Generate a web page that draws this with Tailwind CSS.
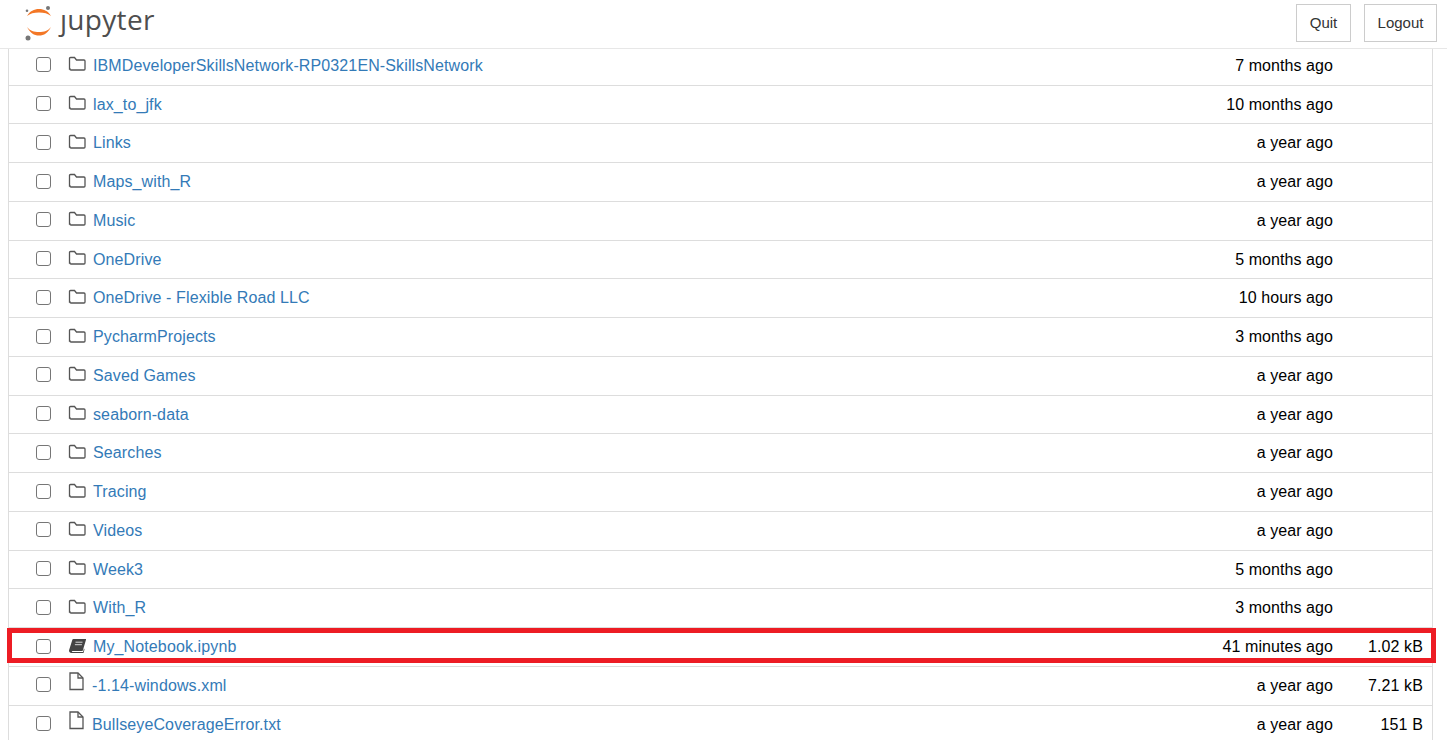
<!DOCTYPE html>
<html lang="en">
<head>
  <meta charset="UTF-8" />
  <title>Jupyter</title>
  <script src="https://cdn.jsdelivr.net/npm/@tailwindcss/browser@4"></script>
</head>
<body class="bg-white text-[16px] tracking-[0.12px] text-black font-['Liberation_Sans',Arial,sans-serif] overflow-hidden h-[740px]">

  <!-- header -->
  <header class="h-[49px] border-b border-[#e7e7e7] flex items-center justify-between pl-[24px] pr-[10px] pb-[2px]">
    <div class="flex items-center gap-[7px]">
      <svg width="29" height="35" viewBox="0 0 29 35">
        <path d="M3 10C6 5 10 3 15 3s9 2 12 7C24 7.500 20 6.500 15 6.500S6 7.500 3 10z" fill="#f37726"/>
        <path d="M3 21c3 6 7 8.500 12 8.500s9-2.500 12-8.500c-3 4-7 5-12 5S6 25 3 21z" fill="#f37726"/>
        <circle cx="24" cy="2" r="2" fill="#767677"/>
        <circle cx="3" cy="4.700" r="1.300" fill="#767677"/>
        <circle cx="4" cy="32" r="2.500" fill="#767677"/>
      </svg>
      <span class="relative text-[28px] leading-none text-[#4e4e4e] tracking-[0.3px] font-['Open_Sans',sans-serif] -mt-[8px]">jupyter<span class="absolute left-0 top-[2px] w-[9px] h-[7.500px] bg-white"></span></span>
    </div>
    <div class="flex gap-[13px] text-[15px] tracking-normal">
      <button class="h-[38px] w-[55px] border border-[#cccccc] text-[#333333]">Quit</button>
      <button class="h-[38px] w-[73px] border border-[#cccccc] text-[#333333]">Logout</button>
    </div>
  </header>

  <!-- file list -->
  <div class="mx-[8px] w-[1425px] border-x border-[#dddddd]">

    <div class="h-[35.600px] flex items-center pl-[27px] pr-[9px] pb-[2.600px]">
      <span class="w-[15px] h-[15px] -mt-[2px] rounded-[3px] border-[1.5px] border-[#767676] bg-white"></span>
      <svg class="ml-[17px] -mt-[3px]" width="18" height="16" viewBox="0 0 18 16" fill="none" stroke="#555555" stroke-width="1.300"><path d="M1.500 13V2.500a1 1 0 0 1 1-1h4l2 2.500h7.500a1 1 0 0 1 1 1v8a1 1 0 0 1-1 1h-13a1 1 0 0 1-1-1z"/></svg>
      <a class="ml-[7px] text-[#337ab7]">IBMDeveloperSkillsNetwork-RP0321EN-SkillsNetwork</a>
      <span class="ml-auto tracking-[0.07px]">7 months ago</span><span class="w-[90px] text-right"></span>
    </div>

    <div class="h-[38.750px] border-t border-[#dddddd] flex items-center pl-[27px] pr-[9px] pt-[0.3px]">
      <span class="w-[15px] h-[15px] -mt-[2px] rounded-[3px] border-[1.5px] border-[#767676] bg-white"></span>
      <svg class="ml-[17px] -mt-[3px]" width="18" height="16" viewBox="0 0 18 16" fill="none" stroke="#555555" stroke-width="1.300"><path d="M1.500 13V2.500a1 1 0 0 1 1-1h4l2 2.500h7.500a1 1 0 0 1 1 1v8a1 1 0 0 1-1 1h-13a1 1 0 0 1-1-1z"/></svg>
      <a class="ml-[7px] text-[#337ab7]">lax_to_jfk</a>
      <span class="ml-auto tracking-[0.07px]">10 months ago</span><span class="w-[90px] text-right"></span>
    </div>

    <div class="h-[38.750px] border-t border-[#dddddd] flex items-center pl-[27px] pr-[9px] pt-[0.3px]">
      <span class="w-[15px] h-[15px] -mt-[2px] rounded-[3px] border-[1.5px] border-[#767676] bg-white"></span>
      <svg class="ml-[17px] -mt-[3px]" width="18" height="16" viewBox="0 0 18 16" fill="none" stroke="#555555" stroke-width="1.300"><path d="M1.500 13V2.500a1 1 0 0 1 1-1h4l2 2.500h7.500a1 1 0 0 1 1 1v8a1 1 0 0 1-1 1h-13a1 1 0 0 1-1-1z"/></svg>
      <a class="ml-[7px] text-[#337ab7]">Links</a>
      <span class="ml-auto tracking-[0.07px]">a year ago</span><span class="w-[90px] text-right"></span>
    </div>

    <div class="h-[38.750px] border-t border-[#dddddd] flex items-center pl-[27px] pr-[9px] pt-[0.3px]">
      <span class="w-[15px] h-[15px] -mt-[2px] rounded-[3px] border-[1.5px] border-[#767676] bg-white"></span>
      <svg class="ml-[17px] -mt-[3px]" width="18" height="16" viewBox="0 0 18 16" fill="none" stroke="#555555" stroke-width="1.300"><path d="M1.500 13V2.500a1 1 0 0 1 1-1h4l2 2.500h7.500a1 1 0 0 1 1 1v8a1 1 0 0 1-1 1h-13a1 1 0 0 1-1-1z"/></svg>
      <a class="ml-[7px] text-[#337ab7]">Maps_with_R</a>
      <span class="ml-auto tracking-[0.07px]">a year ago</span><span class="w-[90px] text-right"></span>
    </div>

    <div class="h-[38.750px] border-t border-[#dddddd] flex items-center pl-[27px] pr-[9px] pt-[0.3px]">
      <span class="w-[15px] h-[15px] -mt-[2px] rounded-[3px] border-[1.5px] border-[#767676] bg-white"></span>
      <svg class="ml-[17px] -mt-[3px]" width="18" height="16" viewBox="0 0 18 16" fill="none" stroke="#555555" stroke-width="1.300"><path d="M1.500 13V2.500a1 1 0 0 1 1-1h4l2 2.500h7.500a1 1 0 0 1 1 1v8a1 1 0 0 1-1 1h-13a1 1 0 0 1-1-1z"/></svg>
      <a class="ml-[7px] text-[#337ab7]">Music</a>
      <span class="ml-auto tracking-[0.07px]">a year ago</span><span class="w-[90px] text-right"></span>
    </div>

    <div class="h-[38.750px] border-t border-[#dddddd] flex items-center pl-[27px] pr-[9px] pt-[0.3px]">
      <span class="w-[15px] h-[15px] -mt-[2px] rounded-[3px] border-[1.5px] border-[#767676] bg-white"></span>
      <svg class="ml-[17px] -mt-[3px]" width="18" height="16" viewBox="0 0 18 16" fill="none" stroke="#555555" stroke-width="1.300"><path d="M1.500 13V2.500a1 1 0 0 1 1-1h4l2 2.500h7.500a1 1 0 0 1 1 1v8a1 1 0 0 1-1 1h-13a1 1 0 0 1-1-1z"/></svg>
      <a class="ml-[7px] text-[#337ab7]">OneDrive</a>
      <span class="ml-auto tracking-[0.07px]">5 months ago</span><span class="w-[90px] text-right"></span>
    </div>

    <div class="h-[38.750px] border-t border-[#dddddd] flex items-center pl-[27px] pr-[9px] pt-[0.3px]">
      <span class="w-[15px] h-[15px] -mt-[2px] rounded-[3px] border-[1.5px] border-[#767676] bg-white"></span>
      <svg class="ml-[17px] -mt-[3px]" width="18" height="16" viewBox="0 0 18 16" fill="none" stroke="#555555" stroke-width="1.300"><path d="M1.500 13V2.500a1 1 0 0 1 1-1h4l2 2.500h7.500a1 1 0 0 1 1 1v8a1 1 0 0 1-1 1h-13a1 1 0 0 1-1-1z"/></svg>
      <a class="ml-[7px] text-[#337ab7]">OneDrive - Flexible Road LLC</a>
      <span class="ml-auto tracking-[0.07px]">10 hours ago</span><span class="w-[90px] text-right"></span>
    </div>

    <div class="h-[38.750px] border-t border-[#dddddd] flex items-center pl-[27px] pr-[9px] pt-[0.3px]">
      <span class="w-[15px] h-[15px] -mt-[2px] rounded-[3px] border-[1.5px] border-[#767676] bg-white"></span>
      <svg class="ml-[17px] -mt-[3px]" width="18" height="16" viewBox="0 0 18 16" fill="none" stroke="#555555" stroke-width="1.300"><path d="M1.500 13V2.500a1 1 0 0 1 1-1h4l2 2.500h7.500a1 1 0 0 1 1 1v8a1 1 0 0 1-1 1h-13a1 1 0 0 1-1-1z"/></svg>
      <a class="ml-[7px] text-[#337ab7]">PycharmProjects</a>
      <span class="ml-auto tracking-[0.07px]">3 months ago</span><span class="w-[90px] text-right"></span>
    </div>

    <div class="h-[38.750px] border-t border-[#dddddd] flex items-center pl-[27px] pr-[9px] pt-[0.3px]">
      <span class="w-[15px] h-[15px] -mt-[2px] rounded-[3px] border-[1.5px] border-[#767676] bg-white"></span>
      <svg class="ml-[17px] -mt-[3px]" width="18" height="16" viewBox="0 0 18 16" fill="none" stroke="#555555" stroke-width="1.300"><path d="M1.500 13V2.500a1 1 0 0 1 1-1h4l2 2.500h7.500a1 1 0 0 1 1 1v8a1 1 0 0 1-1 1h-13a1 1 0 0 1-1-1z"/></svg>
      <a class="ml-[7px] text-[#337ab7]">Saved Games</a>
      <span class="ml-auto tracking-[0.07px]">a year ago</span><span class="w-[90px] text-right"></span>
    </div>

    <div class="h-[38.750px] border-t border-[#dddddd] flex items-center pl-[27px] pr-[9px] pt-[0.3px]">
      <span class="w-[15px] h-[15px] -mt-[2px] rounded-[3px] border-[1.5px] border-[#767676] bg-white"></span>
      <svg class="ml-[17px] -mt-[3px]" width="18" height="16" viewBox="0 0 18 16" fill="none" stroke="#555555" stroke-width="1.300"><path d="M1.500 13V2.500a1 1 0 0 1 1-1h4l2 2.500h7.500a1 1 0 0 1 1 1v8a1 1 0 0 1-1 1h-13a1 1 0 0 1-1-1z"/></svg>
      <a class="ml-[7px] text-[#337ab7]">seaborn-data</a>
      <span class="ml-auto tracking-[0.07px]">a year ago</span><span class="w-[90px] text-right"></span>
    </div>

    <div class="h-[38.750px] border-t border-[#dddddd] flex items-center pl-[27px] pr-[9px] pt-[0.3px]">
      <span class="w-[15px] h-[15px] -mt-[2px] rounded-[3px] border-[1.5px] border-[#767676] bg-white"></span>
      <svg class="ml-[17px] -mt-[3px]" width="18" height="16" viewBox="0 0 18 16" fill="none" stroke="#555555" stroke-width="1.300"><path d="M1.500 13V2.500a1 1 0 0 1 1-1h4l2 2.500h7.500a1 1 0 0 1 1 1v8a1 1 0 0 1-1 1h-13a1 1 0 0 1-1-1z"/></svg>
      <a class="ml-[7px] text-[#337ab7]">Searches</a>
      <span class="ml-auto tracking-[0.07px]">a year ago</span><span class="w-[90px] text-right"></span>
    </div>

    <div class="h-[38.750px] border-t border-[#dddddd] flex items-center pl-[27px] pr-[9px] pt-[0.3px]">
      <span class="w-[15px] h-[15px] -mt-[2px] rounded-[3px] border-[1.5px] border-[#767676] bg-white"></span>
      <svg class="ml-[17px] -mt-[3px]" width="18" height="16" viewBox="0 0 18 16" fill="none" stroke="#555555" stroke-width="1.300"><path d="M1.500 13V2.500a1 1 0 0 1 1-1h4l2 2.500h7.500a1 1 0 0 1 1 1v8a1 1 0 0 1-1 1h-13a1 1 0 0 1-1-1z"/></svg>
      <a class="ml-[7px] text-[#337ab7]">Tracing</a>
      <span class="ml-auto tracking-[0.07px]">a year ago</span><span class="w-[90px] text-right"></span>
    </div>

    <div class="h-[38.750px] border-t border-[#dddddd] flex items-center pl-[27px] pr-[9px] pt-[0.3px]">
      <span class="w-[15px] h-[15px] -mt-[2px] rounded-[3px] border-[1.5px] border-[#767676] bg-white"></span>
      <svg class="ml-[17px] -mt-[3px]" width="18" height="16" viewBox="0 0 18 16" fill="none" stroke="#555555" stroke-width="1.300"><path d="M1.500 13V2.500a1 1 0 0 1 1-1h4l2 2.500h7.500a1 1 0 0 1 1 1v8a1 1 0 0 1-1 1h-13a1 1 0 0 1-1-1z"/></svg>
      <a class="ml-[7px] text-[#337ab7]">Videos</a>
      <span class="ml-auto tracking-[0.07px]">a year ago</span><span class="w-[90px] text-right"></span>
    </div>

    <div class="h-[38.750px] border-t border-[#dddddd] flex items-center pl-[27px] pr-[9px] pt-[0.3px]">
      <span class="w-[15px] h-[15px] -mt-[2px] rounded-[3px] border-[1.5px] border-[#767676] bg-white"></span>
      <svg class="ml-[17px] -mt-[3px]" width="18" height="16" viewBox="0 0 18 16" fill="none" stroke="#555555" stroke-width="1.300"><path d="M1.500 13V2.500a1 1 0 0 1 1-1h4l2 2.500h7.500a1 1 0 0 1 1 1v8a1 1 0 0 1-1 1h-13a1 1 0 0 1-1-1z"/></svg>
      <a class="ml-[7px] text-[#337ab7]">Week3</a>
      <span class="ml-auto tracking-[0.07px]">5 months ago</span><span class="w-[90px] text-right"></span>
    </div>

    <div class="h-[38.750px] border-t border-[#dddddd] flex items-center pl-[27px] pr-[9px] pt-[0.3px]">
      <span class="w-[15px] h-[15px] -mt-[2px] rounded-[3px] border-[1.5px] border-[#767676] bg-white"></span>
      <svg class="ml-[17px] -mt-[3px]" width="18" height="16" viewBox="0 0 18 16" fill="none" stroke="#555555" stroke-width="1.300"><path d="M1.500 13V2.500a1 1 0 0 1 1-1h4l2 2.500h7.500a1 1 0 0 1 1 1v8a1 1 0 0 1-1 1h-13a1 1 0 0 1-1-1z"/></svg>
      <a class="ml-[7px] text-[#337ab7]">With_R</a>
      <span class="ml-auto tracking-[0.07px]">3 months ago</span><span class="w-[90px] text-right"></span>
    </div>

    <!-- highlighted notebook row -->
    <div class="relative h-[38.750px] border-t border-[#dddddd] flex items-center pl-[27px] pr-[9px] pt-[0.3px]">
      <div class="absolute -left-[2px] -right-[4px] top-0 h-[34.500px] border-[5px] border-[#ed1c24]"></div>
      <span class="w-[15px] h-[15px] -mt-[2px] rounded-[3px] border-[1.5px] border-[#767676] bg-white"></span>
      <svg class="ml-[17px] -mt-[3px]" width="18" height="16" viewBox="0 0 18 16"><path d="M5.500 1H17.500a.5.5 0 0 1 .5.700L14.800 12.500a1 1 0 0 1-1 .6H4.500c-1 0-1 1 0 1H15l1-3.500.5.800-1 3.600H3.500C1.500 15 .6 13.500 1.200 11.800L4.200 2.200A1.500 1.500 0 0 1 5.500 1z" fill="#444444"/><path d="M7.500 4.200h7M6.900 6.700h7" stroke="#ffffff" stroke-width="0.800"/></svg>
      <a class="ml-[7px] text-[#337ab7]">My_Notebook.ipynb</a>
      <span class="ml-auto tracking-[0.07px]">41 minutes ago</span><span class="w-[90px] text-right">1.02 kB</span>
    </div>

    <div class="h-[38.750px] border-t border-[#dddddd] flex items-center pl-[27px] pr-[9px] pt-[0.3px]">
      <span class="w-[15px] h-[15px] -mt-[2px] rounded-[3px] border-[1.5px] border-[#767676] bg-white"></span>
      <svg class="ml-[17px] -mt-[8px]" width="16" height="19" viewBox="0 0 16 19" fill="none" stroke="#555555" stroke-width="1.300"><path d="M2 1h8l5 5v11.500H2z"/><path d="M10 1v5h5"/></svg>
      <a class="ml-[8px] text-[#337ab7]">-1.14-windows.xml</a>
      <span class="ml-auto tracking-[0.07px]">a year ago</span><span class="w-[90px] text-right">7.21 kB</span>
    </div>

    <div class="h-[38.750px] border-t border-[#dddddd] flex items-center pl-[27px] pr-[9px] pt-[0.3px]">
      <span class="w-[15px] h-[15px] -mt-[2px] rounded-[3px] border-[1.5px] border-[#767676] bg-white"></span>
      <svg class="ml-[17px] -mt-[8px]" width="16" height="19" viewBox="0 0 16 19" fill="none" stroke="#555555" stroke-width="1.300"><path d="M2 1h8l5 5v11.500H2z"/><path d="M10 1v5h5"/></svg>
      <a class="ml-[8px] text-[#337ab7]">BullseyeCoverageError.txt</a>
      <span class="ml-auto tracking-[0.07px]">a year ago</span><span class="w-[90px] text-right">151 B</span>
    </div>
  </div>
</body>
</html>
